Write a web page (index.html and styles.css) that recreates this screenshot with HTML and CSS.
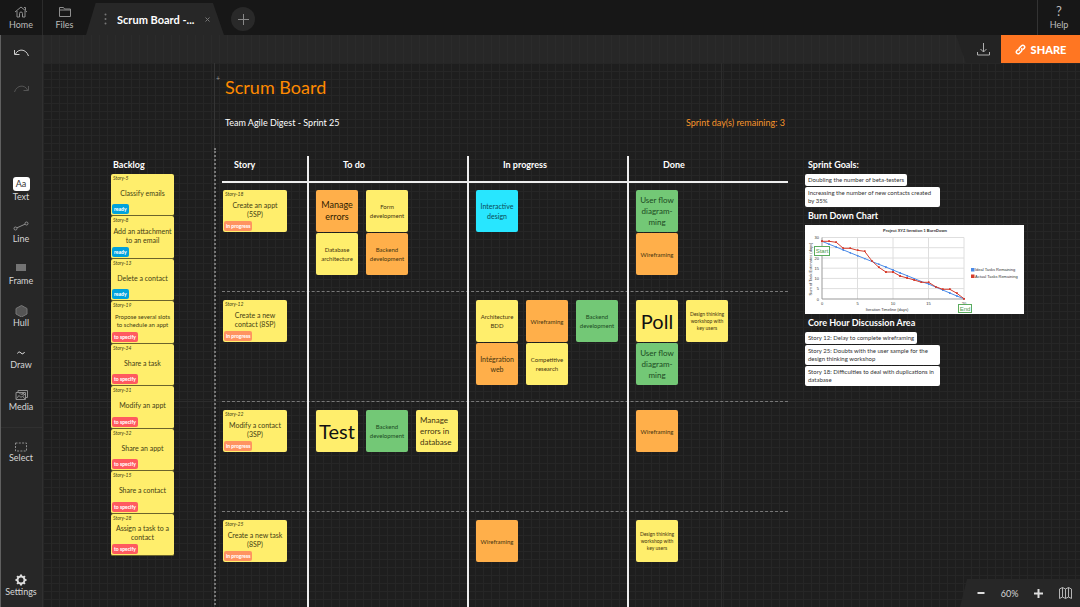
FILE: index.html
```html
<!DOCTYPE html>
<html lang="en">
<head>
<meta charset="utf-8">
<meta name="viewport" content="width=device-width, initial-scale=1">
<title>Scrum Board</title>
<link rel="stylesheet" href="styles.css">
</head>
<body>
<div class="app">
  <header class="topbar">
    <button class="nav-btn">
      <svg width="14" height="12" viewBox="0 0 14 12"><path d="M1 6 7 1l6 5M3 5v6h2.500V7.500a1.500 1.500 0 0 1 3 0V11H11V5M10 1.500h1.500V4"/></svg>
      <span>Home</span>
    </button>
    <button class="nav-btn nav-files">
      <svg width="14" height="12" viewBox="0 0 14 12"><path d="M1.500 10.500v-9h4l1 1.500h6v7.500zM1.500 4h11"/></svg>
      <span>Files</span>
    </button>
    <div class="tab">
      <svg class="tab-dots" width="3" height="12" viewBox="0 0 3 12"><circle cx="1.500" cy="1.500" r="1"/><circle cx="1.500" cy="6" r="1"/><circle cx="1.500" cy="10.500" r="1"/></svg>
      <span class="tab-title">Scrum Board -...</span>
      <button class="tab-close" aria-label="Close tab"><svg width="5" height="5" viewBox="0 0 5 5"><path d="m.5.5 4 4m0-4-4 4"/></svg></button>
    </div>
    <button class="tab-add" aria-label="New tab"><svg width="11" height="11" viewBox="0 0 11 11"><path d="M5.500 0v11M0 5.500h11"/></svg></button>
    <button class="nav-btn nav-help">
      <span class="help-mark">?</span>
      <span>Help</span>
    </button>
  </header>

  <nav class="sidebar">
    <button class="history" aria-label="Undo"><svg width="17" height="12" viewBox="0 0 17 12"><path d="M2.500 7C5 1.500 13 1.500 15.500 9M1.500 3v4.500H6.500"/></svg></button>
    <button class="history history-off" aria-label="Redo"><svg width="17" height="12" viewBox="0 0 17 12"><path d="M14.500 7C12 1.500 4 1.500 1.500 9M15.500 3v4.500H10.500"/></svg></button>
    <div class="tools">
      <button class="tool"><span class="text-icon">Aa</span><span>Text</span></button>
      <button class="tool"><svg width="16" height="12" viewBox="0 0 16 12"><circle cx="2.500" cy="7.500" r="1.500"/><circle cx="13.500" cy="2.500" r="1.500"/><path d="m4 6.800 8-3.600"/></svg><span>Line</span></button>
      <button class="tool"><svg width="10" height="11" viewBox="0 0 10 11"><path class="solid" d="M0 0h10v7H0z"/></svg><span>Frame</span></button>
      <button class="tool"><svg width="13" height="12" viewBox="0 0 13 12"><path class="hull" d="m6.500.5 5.500 3v5.500l-5.500 3L1 9V3.500z"/></svg><span>Hull</span></button>
      <button class="tool"><svg width="10" height="10" viewBox="0 0 10 10"><path class="bright" d="M1.500 4.500c1-2 2-2 3.500-.5s2.500 1 3.500-1"/></svg><span>Draw</span></button>
      <button class="tool"><svg width="13" height="12" viewBox="0 0 13 12"><path d="M1 3.500h9.500v7H1zM3 3.500v-2h9.500v7h-2M1.500 9.500 4 6.500l2 2 1.500-1.500 2.500 3M4 3.500 6 5.500l2-1.500 2 2"/><circle cx="8.500" cy="5.500" r=".8"/></svg><span>Media</span></button>
    </div>
    <div class="tools tools-split">
      <button class="tool"><svg width="12" height="10" viewBox="0 0 12 10"><path stroke-dasharray="2 1.300" d="M.5 1h11v8H.5z"/></svg><span>Select</span></button>
    </div>
    <button class="tool tool-settings"><svg width="12" height="12" viewBox="0 0 12 12"><circle class="bright gear" cx="6" cy="6" r="3.500"/><path class="bright" stroke-width="2" d="M6 .5v1.700M6 9.800v1.700M.5 6h1.700M9.800 6h1.700M2.100 2.100l1.200 1.200M8.700 8.700l1.200 1.200M9.900 2.100 8.700 3.300M3.300 8.700 2.100 9.900"/></svg><span>Settings</span></button>
  </nav>

  <main class="workspace">
    <div class="actionbar">
      <div class="actions">
        <button class="download" aria-label="Download"><svg width="13" height="13" viewBox="0 0 13 13"><path d="M6.500 0v9M3.500 6l3 3 3-3M.5 9v3h12V9"/></svg></button>
        <button class="share"><svg width="11" height="11" viewBox="0 0 11 11"><path d="M4.600 6.600C3.600 5.600 3.800 4.600 4.600 3.800L6.600 1.800C8.300.2 10.700 2.500 9.200 4.300L8 5.500M6.300 4.300C7.300 5.300 7.200 6.400 6.400 7.200L4.400 9.200C2.700 10.800.3 8.500 1.800 6.700L3 5.500"/></svg>SHARE</button>
      </div>
    </div>

    <div class="canvas">
      <section class="backlog">
        <h2 class="heading">Backlog</h2>
        <div class="backlog-list">
          <article class="story"><span class="ref">Story-5</span><p>Classify emails</p><span class="tag ready">ready</span></article>
          <article class="story"><span class="ref">Story-8</span><p>Add an attachment to an email</p><span class="tag ready">ready</span></article>
          <article class="story"><span class="ref">Story-13</span><p>Delete a contact</p><span class="tag ready">ready</span></article>
          <article class="story small"><span class="ref">Story-19</span><p>Propose several slots to schedule an appt</p><span class="tag specify">to specify</span></article>
          <article class="story"><span class="ref">Story-34</span><p>Share a task</p><span class="tag specify">to specify</span></article>
          <article class="story"><span class="ref">Story-31</span><p>Modify an appt</p><span class="tag specify">to specify</span></article>
          <article class="story"><span class="ref">Story-32</span><p>Share an appt</p><span class="tag specify">to specify</span></article>
          <article class="story"><span class="ref">Story-15</span><p>Share a contact</p><span class="tag specify">to specify</span></article>
          <article class="story"><span class="ref">Story-28</span><p>Assign a task to a contact</p><span class="tag specify">to specify</span></article>
        </div>
      </section>

      <div class="divider"></div>

      <section class="board">
        <h1 class="title">Scrum Board</h1>
        <div class="subtitle"><span>Team Agile Digest - Sprint 25</span><span class="remaining">Sprint day(s) remaining: 3</span></div>
        <div class="lane lane-head">
          <h2 class="heading">Story</h2><h2 class="heading">To do</h2><h2 class="heading">In progress</h2><h2 class="heading">Done</h2>
        </div>
        <div class="lane lane-first">
          <div class="cell"><article class="story"><span class="ref">Story-18</span><p>Create an appt (5SP)</p><span class="tag progress">in progress</span></article></div>
          <div class="cell">
            <div class="stack"><div class="card orange lg strong">Manage errors</div><div class="card yellow sm">Database architecture</div></div>
            <div class="stack"><div class="card yellow sm">Form development</div><div class="card orange sm">Backend development</div></div>
          </div>
          <div class="cell"><div class="stack"><div class="card cyan md">Interactive design</div></div></div>
          <div class="cell"><div class="stack"><div class="card green lg">User flow diagram-<br>ming</div><div class="card orange sm">Wireframing</div></div></div>
        </div>
        <div class="lane">
          <div class="cell"><article class="story"><span class="ref">Story-12</span><p>Create a new contact (8SP)</p><span class="tag progress">in progress</span></article></div>
          <div class="cell"></div>
          <div class="cell">
            <div class="stack"><div class="card yellow sm">Architecture BDD</div><div class="card orange md">Intégration web</div></div>
            <div class="stack"><div class="card orange sm">Wireframing</div><div class="card yellow sm">Competitive research</div></div>
            <div class="stack"><div class="card green sm">Backend development</div></div>
          </div>
          <div class="cell">
            <div class="stack"><div class="card yellow xl">Poll</div><div class="card green lg">User flow diagram-<br>ming</div></div>
            <div class="stack"><div class="card yellow xs">Design thinking workshop with key users</div></div>
          </div>
        </div>
        <div class="lane">
          <div class="cell"><article class="story"><span class="ref">Story-22</span><p>Modify a contact (3SP)</p><span class="tag progress">in progress</span></article></div>
          <div class="cell">
            <div class="stack"><div class="card yellow xl">Test</div></div>
            <div class="stack"><div class="card green sm">Backend development</div></div>
            <div class="stack"><div class="card yellow lg start">Manage errors in database</div></div>
          </div>
          <div class="cell"></div>
          <div class="cell"><div class="stack"><div class="card orange sm">Wireframing</div></div></div>
        </div>
        <div class="lane lane-last">
          <div class="cell"><article class="story"><span class="ref">Story-25</span><p>Create a new task (8SP)</p><span class="tag progress">in progress</span></article></div>
          <div class="cell"></div>
          <div class="cell"><div class="stack"><div class="card orange sm">Wireframing</div></div></div>
          <div class="cell"><div class="stack"><div class="card yellow xs">Design thinking workshop with key users</div></div></div>
        </div>
      </section>

      <aside class="notes">
        <h2 class="heading">Sprint Goals:</h2>
        <div class="note-list">
          <p class="note">Doubling the number of beta-testers</p>
          <p class="note">Increasing the number of new contacts created by 35%</p>
        </div>
        <h2 class="heading">Burn Down Chart</h2>
        <svg class="chart" viewBox="0 0 219 89" role="img" aria-label="Burn down chart">
          <defs>
            <marker id="dot-ideal" markerUnits="userSpaceOnUse" markerWidth="2" markerHeight="2" refX="1" refY="1"><circle class="key-ideal" cx="1" cy="1" r="1"/></marker>
            <marker id="dot-actual" markerUnits="userSpaceOnUse" markerWidth="2" markerHeight="2" refX="1" refY="1"><path class="key-actual" d="M0 0h2v2H0z"/></marker>
          </defs>
          <g class="gridlines"><path d="M17 12.500h142M17 22.700h142M17 33h142M17 43.200h142M17 53.400h142M17 63.600h142M52.500 12.500v61.500M88 12.500v61.500M123.500 12.500v61.500M159 12.500v61.500"/><path class="axis" d="M17 12.500V74h142"/></g>
          <text class="chart-title" x="110" y="7">Project XYZ Iteration 1 BurnDown</text>
          <g class="ticks-y"><text x="14" y="14">30</text><text x="14" y="34.500">20</text><text x="14" y="44.500">15</text><text x="14" y="55">10</text><text x="14" y="65">5</text><text x="14" y="75.500">0</text></g>
          <g class="ticks-x"><text x="17" y="79.500">0</text><text x="52.500" y="79.500">5</text><text x="88" y="79.500">10</text><text x="123.500" y="79.500">15</text><text x="159" y="79.500">20</text><text x="82" y="85.500">Iteration Timeline (days)</text></g>
          <text class="axis-name" transform="translate(7 44) rotate(-90)">Sum of Task Estimates (days)</text>
          <polyline class="ideal" points="17,16.300 24.100,19.200 31.200,22 38.300,24.900 45.400,27.800 52.500,30.700 59.600,33.500 66.700,36.400 73.800,39.300 80.900,42.100 88,45 95.100,47.900 102.200,50.700 109.300,53.600 116.400,56.500 123.500,59 130.600,62 137.700,65 144.800,68 151.900,71 159,73.700"/>
          <polyline class="actual" points="17,16.300 24.100,16.300 31.200,17.300 38.300,23.300 45.400,23.300 52.500,25.300 59.600,26.300 66.700,35.700 73.800,42.300 80.900,47 88,47 95.100,51 102.200,53 109.300,55 116.400,57.300 123.500,57.300 130.600,61.700 137.700,64.300 144.800,64.300 151.900,68.300 159,73.700"/>
          <path class="key-ideal" d="M166 43h3.500v3.500H166z"/><text x="170" y="46.200">Ideal Tasks Remaining</text>
          <path class="key-actual" d="M166 49.500h3.500V53H166z"/><text x="170" y="52.700">Actual Tasks Remaining</text>
          <g class="flag"><rect x="9.500" y="21.500" width="15" height="9"/><text x="17" y="28">Start</text></g>
          <g class="flag"><rect x="153.500" y="79.500" width="13" height="8"/><text x="160" y="85.500">End</text></g>
        </svg>
        <h2 class="heading">Core Hour Discussion Area</h2>
        <div class="note-list">
          <p class="note">Story 12: Delay to complete wireframing</p>
          <p class="note">Story 25: Doubts with the user sample for the design thinking workshop</p>
          <p class="note">Story 18: Difficulties to deal with duplications in database</p>
        </div>
      </aside>
    </div>

    <div class="zoombar">
      <button aria-label="Zoom out"><svg width="8" height="8" viewBox="0 0 8 8"><path class="thick" d="M.5 4h7"/></svg></button>
      <span>60%</span>
      <button aria-label="Zoom in"><svg width="9" height="9" viewBox="0 0 9 9"><path class="thick" d="M0 4.500h9M4.500 0v9"/></svg></button>
      <button aria-label="Map"><svg width="13" height="12" viewBox="0 0 13 12"><path d="M.5 2 3.500.5l3 1.500 3-1.500 3 1.500v9.500l-3-1.500-3 1.500-3-1.500-3 1.500zM3.500.5V10M6.500 2v9.500M9.500.5V10"/></svg></button>
    </div>
  </main>
</div>
</body>
</html>
```
FILE: styles.css
```css
* { box-sizing: border-box; }

body {
  margin: 0;
  background: #1e1e1e;
  color: #fff;
  font-family: Lato, "Open Sans", sans-serif;
  font-size: 9px;
}

h1, h2, p { margin: 0; font-weight: 400; }

button {
  margin: 0;
  padding: 0;
  border: 0;
  background: none;
  color: inherit;
  font: inherit;
  cursor: pointer;
}

svg { display: block; fill: none; stroke: #8f8f8f; stroke-width: 1; }

.app {
  display: grid;
  grid-template: 35px 1fr / 43px 1fr;
  height: 100vh;
  overflow: hidden;
}

/* Top bar */
.topbar {
  grid-column: 1 / -1;
  display: flex;
  background: #171717;
}
.nav-btn {
  display: flex;
  flex-direction: column;
  align-items: center;
  justify-content: flex-end;
  gap: 1px;
  width: 43px;
  padding-bottom: 4px;
  border-right: 1px solid #2b2b2b;
  color: #bcbcbc;
  line-height: 12px;
}
.nav-files { border: 0; }
.nav-help { margin-left: auto; border-right: 0; border-left: 1px solid #333; }
.help-mark { font-size: 13px; line-height: 13px; }

.tab {
  display: flex;
  align-items: center;
  width: 138px;
  margin-top: 3px;
  padding: 0 14px 0 18px;
  background: #272727;
  clip-path: polygon(7% 0, 92% 0, 100% 100%, 0 100%);
}
.tab-dots { stroke: none; fill: #777; }
.tab-title { flex: 1; padding-left: 10px; font-size: 11px; font-weight: 700; white-space: nowrap; }
.tab-close svg { stroke: #777; }
.tab-add {
  display: grid;
  place-items: center;
  align-self: center;
  width: 24px;
  height: 24px;
  margin: 3px 0 0 7px;
  border-radius: 50%;
  background: #292929;
}
.tab-add svg { stroke: #888; stroke-width: 1; }

/* Sidebar */
.sidebar {
  display: flex;
  flex-direction: column;
  border-left: 1px solid #606060;
  border-right: 1px solid #303030;
  background: #272727;
}
.history { display: grid; place-items: center; height: 36px; }
.history svg { stroke: #d0d0d0; }
.history-off svg { stroke: #555; }
.tools { display: flex; flex-direction: column; margin-top: 54px; }
.tools-split { margin-top: 14px; border-top: 1px solid #303030; }
.tool {
  display: flex;
  flex-direction: column;
  align-items: center;
  justify-content: flex-end;
  height: 42px;
  padding-right: 1px;
  line-height: 12px;
  color: #d6d6d6;
}
.tools-split .tool { height: 36px; }
.tool-settings { margin-top: auto; margin-bottom: 9px; }
.text-icon {
  width: 17px;
  border-radius: 3px;
  background: #fff;
  color: #333;
  line-height: 14px;
  text-align: center;
}
.solid { fill: #747474; stroke: none; }
.hull { fill: #555; stroke: #777; }
.bright { stroke: #ddd; }
.gear { stroke-width: 2; }

/* Workspace */
.workspace {
  position: relative;
  display: flex;
  flex-direction: column;
  min-width: 0;
  overflow: hidden;
}
.actionbar {
  display: flex;
  justify-content: flex-end;
  height: 28px;
  flex: none;
  background:
    repeating-linear-gradient(90deg, #2b2b2b 0 1px, transparent 1px 8px),
    #272727;
}
.actions {
  display: flex;
  padding-left: 10px;
  background: #232323;
  clip-path: polygon(0 0, 100% 0, 100% 100%, 10px 100%);
}
.download { display: grid; place-items: center; width: 35px; }
.download svg { stroke: #b0b0b0; }
.share {
  display: flex;
  align-items: center;
  justify-content: center;
  gap: 5px;
  width: 79px;
  background: #ff7622;
  font-size: 11px;
  font-weight: 900;
}
.share svg { stroke: #fff; }
.share path { stroke-width: 1.5; }

.canvas {
  flex: 1;
  display: grid;
  grid-template-columns: 63px auto 1fr 236px;
  padding: 0 56px 0 68px;
  background:
    linear-gradient(#343434, #343434) 171px 0 / 1px 100% no-repeat,
    linear-gradient(#2c2c2c, #2c2c2c) 678px 0 / 1px 100% no-repeat,
    linear-gradient(#2c2c2c, #2c2c2c) 0 338px / 100% 1px no-repeat,
    repeating-linear-gradient(90deg, #262626 0 1px, transparent 1px 8px),
    repeating-linear-gradient(#262626 0 1px, transparent 1px 8px),
    #1e1e1e;
}
.heading { font-size: 9px; font-weight: 700; line-height: 18px; }

.backlog { padding-top: 93px; }
.backlog .heading { padding-left: 2px; }
.backlog-list { display: grid; grid-auto-rows: 1fr; min-height: 382px; }

.divider {
  position: relative;
  margin: 85px 6px 0 40px;
  border-left: 2px dotted #777;
}
.divider::before {
  content: "+";
  position: absolute;
  top: -74px;
  left: 0;
  color: #999;
  font-size: 7px;
}

/* Sticky notes with a story reference and a status tag */
.story {
  display: grid;
  grid-template-rows: 9px 1fr auto;
  justify-items: center;
  align-items: center;
  border-bottom: 1px solid #6b642c;
  border-radius: 2px;
  background: #ffee6c;
  color: #443d14;
  font-size: 7px;
  line-height: 9px;
  text-align: center;
}
.story.small { font-size: 6px; line-height: 8px; }
.story.small p { padding: 0 3px; }
.ref { justify-self: start; padding-left: 2px; font-size: 5px; font-style: italic; line-height: 9px; }
.tag {
  justify-self: start;
  margin: 0 0 1px 1px;
  padding: 0 2px;
  border-radius: 2px;
  color: #fff;
  font-size: 5px;
  font-weight: 900;
  line-height: 10px;
}
.ready { background: #00a2dc; }
.specify { background: #ff5a5f; }
.progress { background: #ff9361; }

/* Board */
.board { display: flex; flex-direction: column; padding-top: 9px; }
.title { padding-left: 3px; color: #ff8a00; font-size: 18px; line-height: 30px; }
.subtitle {
  display: flex;
  justify-content: space-between;
  padding: 14px 3px 0;
  line-height: 14px;
}
.remaining { color: #f7952c; }
.lane {
  display: grid;
  grid-template-columns: 85fr 160fr 160fr 161fr;
  min-height: 110px;
  border-top: 1px dashed #777;
}
.lane-head { min-height: 25px; margin-top: 26px; border-top: 0; }
.lane-head .heading { padding-left: 34px; border-left: 2px solid #eee; }
.lane-head .heading:first-child { padding-left: 12px; border: 0; }
.lane-first { border-top: 2px solid #eee; }
.lane-last { flex: 1; }
.cell {
  display: flex;
  align-items: flex-start;
  gap: 8px;
  margin-top: -1px;
  padding: 9px 0 0 7px;
  border-left: 2px solid #eee;
}
.lane-first .cell { padding-top: 8px; }
.cell:first-child { padding-left: 1px; border: 0; }
.cell .story { width: 64px; height: 42px; border-bottom: 0; }
.cell .story p { padding: 0 3px; }
.stack { display: grid; gap: 1px; }
.card {
  display: grid;
  place-content: center;
  width: 42px;
  height: 42px;
  padding: 0 2px;
  border-radius: 2px;
  color: #44330f;
  text-align: center;
}
.yellow { background: #ffee6c; }
.orange { background: #ffaf4a; }
.green { background: #73c876; color: #1c4a22; }
.cyan { background: #28e6ff; color: #0b4a55; }
.xs { font-size: 5px; line-height: 7px; }
.sm { font-size: 6px; line-height: 9px; }
.md { font-size: 7px; line-height: 10px; }
.lg { font-size: 8px; line-height: 11px; }
.xl { color: #111; font-size: 20px; line-height: 24px; }
.strong { color: #2e1c00; font-size: 9px; line-height: 12px; }
.start { padding-left: 4px; text-align: left; }

/* Notes column */
.notes { padding: 93px 0 0 17px; }
.notes .heading { padding-left: 3px; }
.note-list { display: grid; justify-items: start; gap: 1px; max-width: 135px; }
.note {
  padding: 2px 3px;
  border-radius: 2px;
  background: #fff;
  color: #333;
  font-size: 6px;
  line-height: 8px;
}
.chart { width: 100%; background: #fff; }
.chart text { fill: #333; stroke: none; font-family: "Liberation Sans", Arial, sans-serif; font-size: 4px; }
.chart .chart-title { font-weight: 700; text-anchor: middle; }
.gridlines { stroke: #dedede; }
.axis { stroke: #999; }
.chart .ticks-y text { text-anchor: end; }
.chart .ticks-x text, .chart .axis-name, .chart .flag text { text-anchor: middle; }
.ideal { stroke: #4a8ae8; marker: url(#dot-ideal); }
.actual { stroke: #d63c2c; marker: url(#dot-actual); }
.key-ideal { fill: #4a8ae8; stroke: none; }
.key-actual { fill: #d63c2c; stroke: none; }
.flag rect { fill: #fff; stroke: #5bab5e; }
.chart .flag text { fill: #4b9c4e; font-size: 6px; }

/* Zoom controls float over the canvas corner */
.zoombar {
  position: absolute;
  right: 0;
  bottom: 0;
  display: flex;
  align-items: center;
  justify-content: space-between;
  width: 120px;
  height: 28px;
  padding: 0 8px 0 17px;
  background: #272727;
  color: #d6d6d6;
  clip-path: polygon(7px 0, 100% 0, 100% 100%, 0 100%);
}
.zoombar svg { stroke: #b5b5b5; }
.zoombar .thick { stroke: #ddd; stroke-width: 2; }
```
